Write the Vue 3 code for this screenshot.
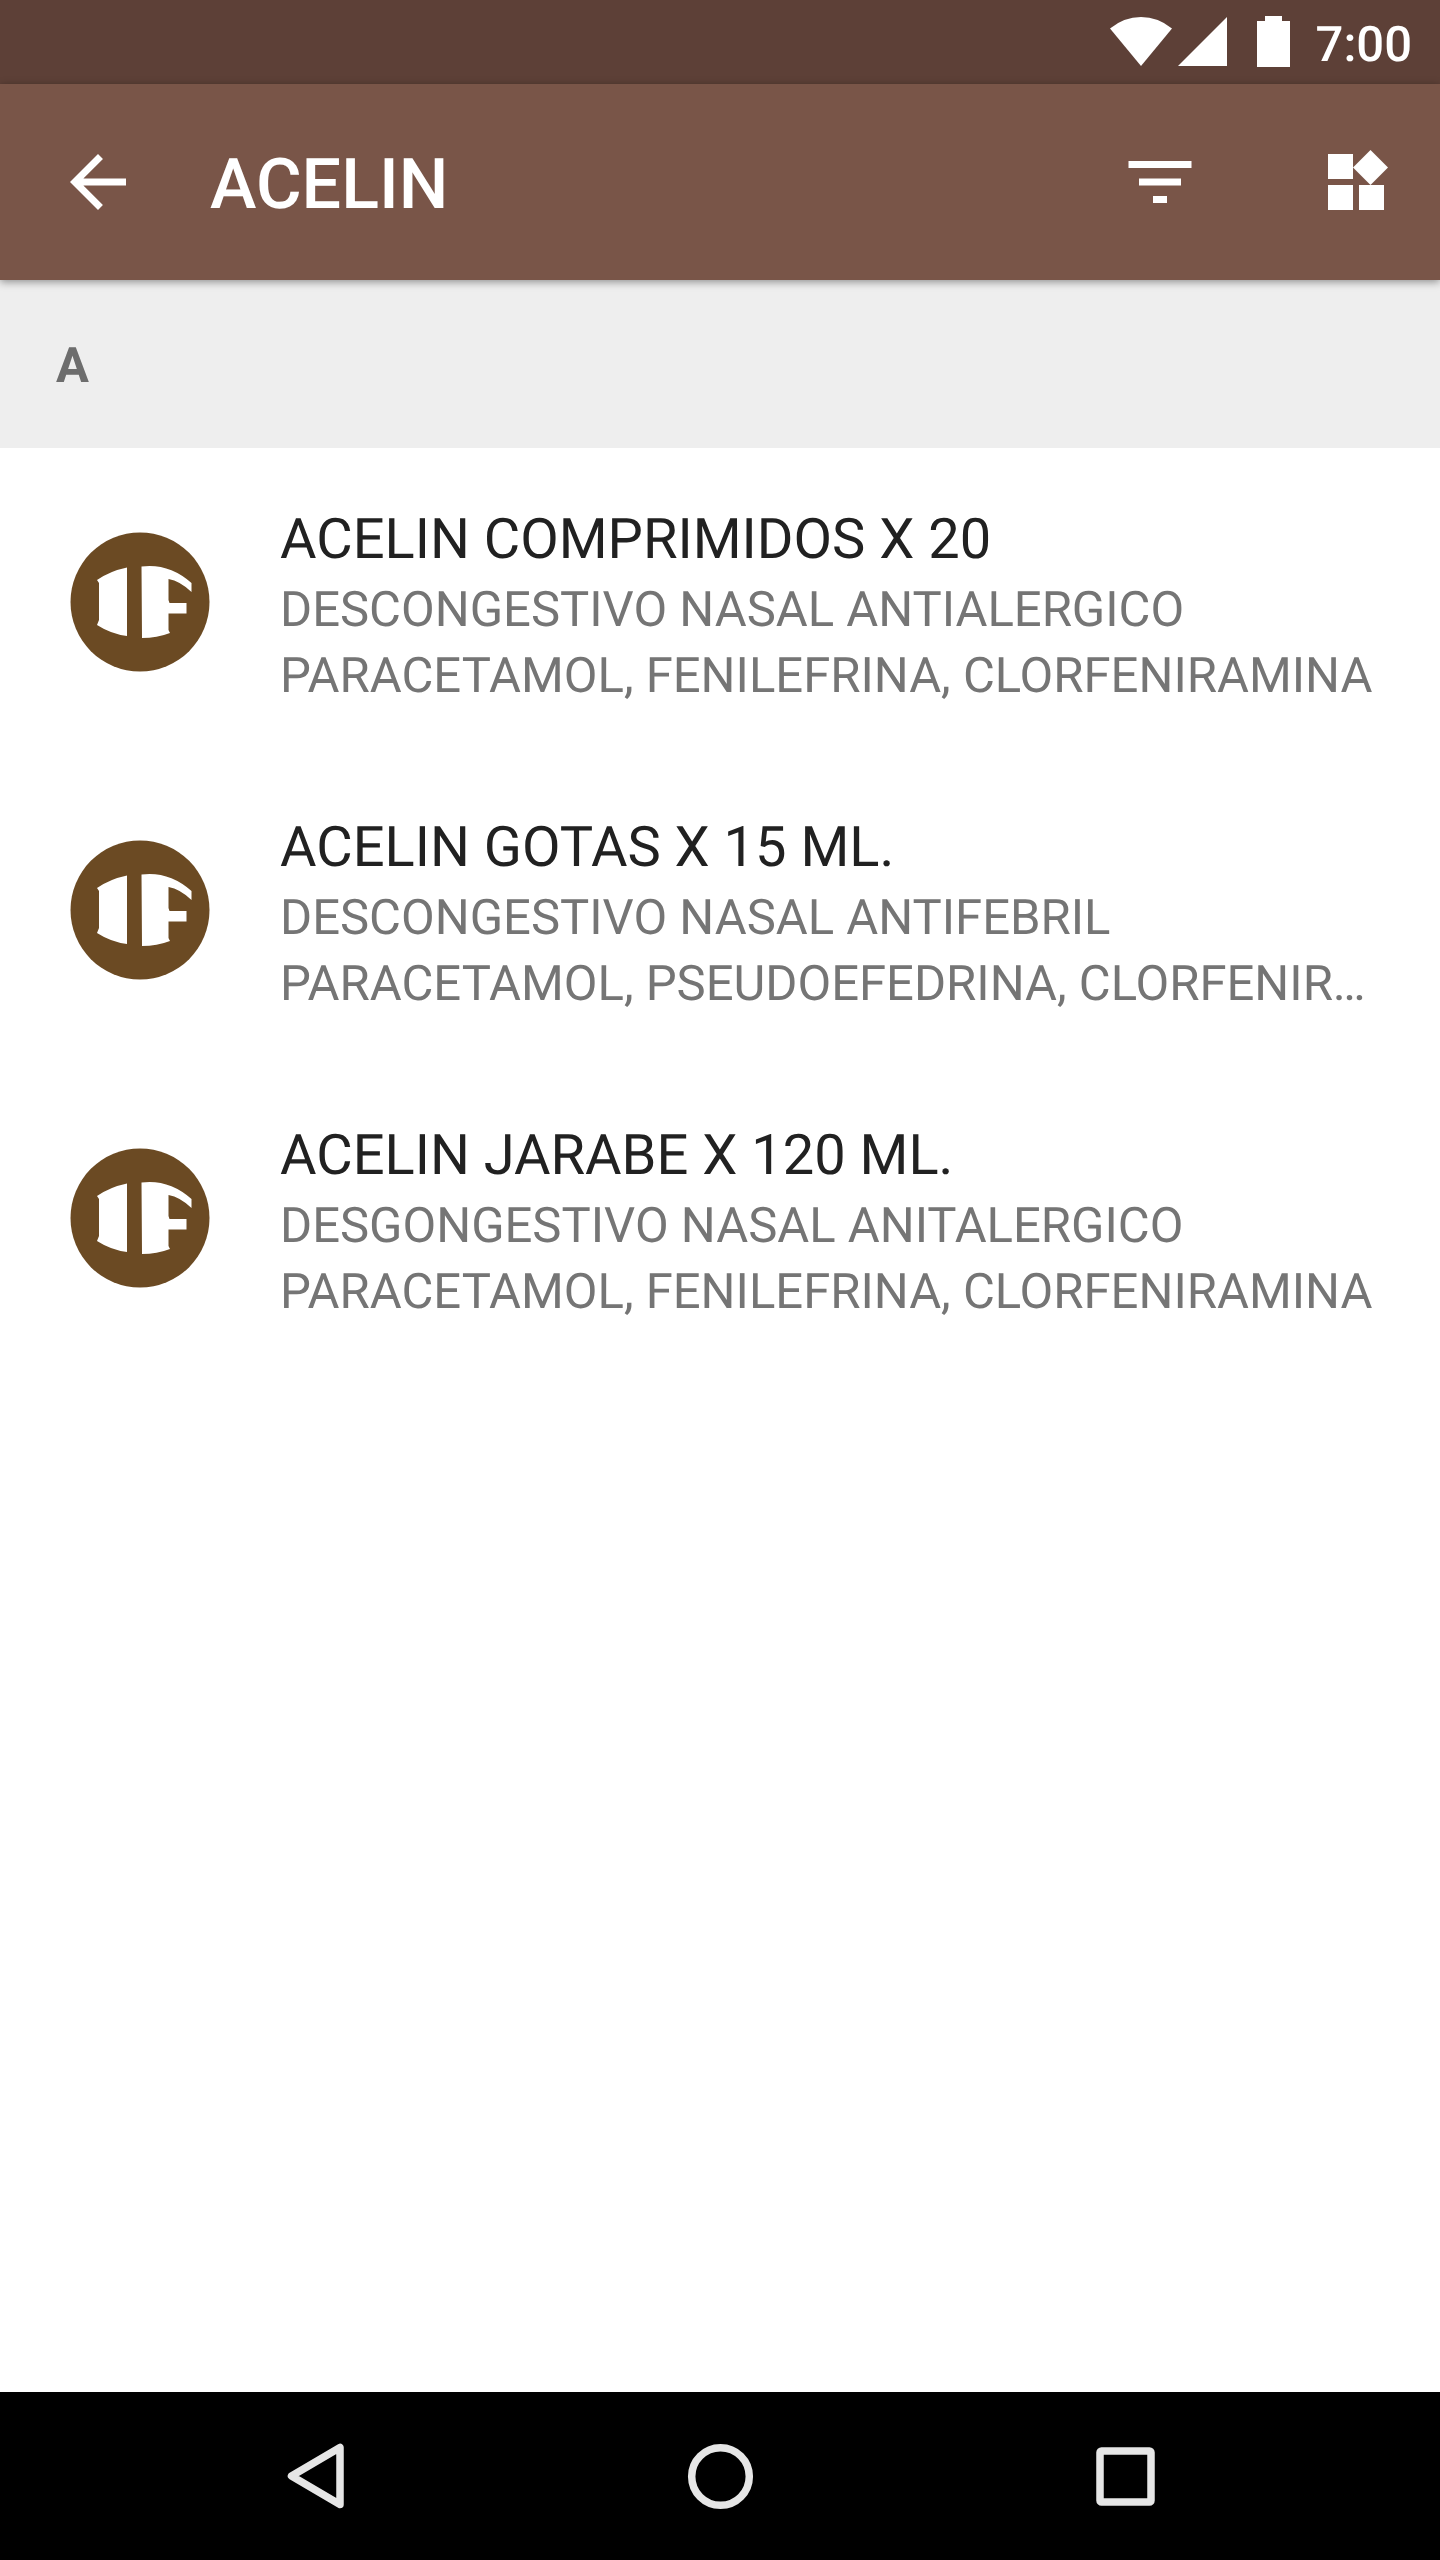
<script setup>
const letter = 'A'
const products = [
  {
    name: 'ACELIN COMPRIMIDOS X 20',
    action: 'DESCONGESTIVO NASAL ANTIALERGICO',
    drugs: 'PARACETAMOL, FENILEFRINA, CLORFENIRAMINA',
  },
  {
    name: 'ACELIN GOTAS X 15 ML.',
    action: 'DESCONGESTIVO NASAL ANTIFEBRIL',
    drugs: 'PARACETAMOL, PSEUDOEFEDRINA, CLORFENIRAMINA',
  },
  {
    name: 'ACELIN JARABE X 120 ML.',
    action: 'DESGONGESTIVO NASAL ANITALERGICO',
    drugs: 'PARACETAMOL, FENILEFRINA, CLORFENIRAMINA',
  },
]
</script>

<template>
  <div class="screen">
    <div class="status">
      <svg class="signals" viewBox="0 0 188 84" aria-hidden="true">
        <path d="M0 28.5Q14 17 31 17T62 28.5L31 66z" />
        <path d="M68 66L117 17V66z" />
        <path d="M147 21h8v-5h17v5h8v46h-33z" />
      </svg>
      <time class="clock">7:00</time>
    </div>

    <header class="toolbar">
      <button class="icon-button" type="button" aria-label="Back">
        <svg viewBox="0 0 24 24"><path d="M20 11H7.83l5.59-5.59L12 4l-8 8 8 8 1.41-1.41L7.83 13H20v-2z" /></svg>
      </button>
      <h1 class="title">ACELIN</h1>
      <div class="actions">
        <button class="icon-button" type="button" aria-label="Filter">
          <svg viewBox="0 0 24 24"><path d="M10 18h4v-2h-4v2zM3 6v2h18V6H3zm3 7h12v-2H6v2z" /></svg>
        </button>
        <button class="icon-button" type="button" aria-label="Categories">
          <svg viewBox="0 0 84 84"><path d="M14 14h25v25H14zM14 45h25v25H14zM45 45h25v25H45zM56.5 10L74 27.5 56.5 45 39 27.5z" /></svg>
        </button>
      </div>
    </header>

    <main class="content">
      <h2 class="section">{{ letter }}</h2>
      <ul class="list">
        <li v-for="product in products" :key="product.name">
          <a class="item" href="#">
            <svg class="logo" viewBox="0 0 140 140" aria-hidden="true">
              <circle cx="70" cy="70" r="69.5" fill="#6b4a23" />
              <path d="M27 48Q40 39 57 35.5V104Q41 102 27 93L29 88V51z" fill="#fff" />
              <path d="M71.5 34.5Q99 31 121.500 51V60Q110 49 98.5 47V68L99.5 71H116.5V81.5H98.5V98L100 101Q87 106 72 106z" fill="#fff" />
            </svg>
            <span class="texts">
              <span class="name">{{ product.name }}</span>
              <span class="detail">{{ product.action }}</span>
              <span class="detail">{{ product.drugs }}</span>
            </span>
          </a>
        </li>
      </ul>
    </main>

    <nav class="navbar">
      <button class="nav-button" type="button" aria-label="Back">
        <svg viewBox="0 0 84 84"><path d="M67 13.5V70.5L18.5 42z" /></svg>
      </button>
      <button class="nav-button" type="button" aria-label="Home">
        <svg viewBox="0 0 84 84"><circle cx="42.5" cy="42.5" r="28.8" /></svg>
      </button>
      <button class="nav-button" type="button" aria-label="Recent apps">
        <svg viewBox="0 0 84 84"><rect x="17" y="17" width="51" height="51" rx="1.5" /></svg>
      </button>
    </nav>
  </div>
</template>

<style>
body {
  margin: 0;
  background: #fff;
}
</style>

<style scoped>
.screen {
  display: flex;
  flex-direction: column;
  min-height: 100vh;
  font-family: Roboto, "Liberation Sans", sans-serif;
  text-rendering: geometricPrecision;
  background: #fff;
}

button {
  display: flex;
  align-items: center;
  justify-content: center;
  padding: 0;
  border: 0;
  background: none;
}

svg {
  display: block;
  flex: none;
}

.status {
  display: flex;
  justify-content: flex-end;
  align-items: center;
  gap: 18px;
  height: 84px;
  padding-right: 28px;
  background: #5d4037;
  color: #fff;
}

.signals {
  width: 188px;
  height: 84px;
  fill: #fff;
}

.clock {
  padding-top: 5px;
  font-size: 49px;
  font-weight: 500;
  line-height: 58px;
}

.toolbar {
  display: flex;
  align-items: center;
  height: 196px;
  padding: 0 42px 0 56px;
  background: #795548;
  color: #fff;
  box-shadow: 0 2px 8px rgba(0, 0, 0, 0.4);
  z-index: 1;
}

.icon-button svg {
  width: 84px;
  height: 84px;
  fill: #fff;
}

.title {
  flex: 1;
  margin: 0;
  padding: 6px 0 0 70px;
  font-size: 70px;
  font-weight: 500;
  line-height: 82px;
}

.actions {
  display: flex;
  gap: 112px;
}

.content {
  flex: 1;
}

.section {
  margin: 0;
  padding: 57px 56px 53px;
  background: #eee;
  color: #6d6d6d;
  font-size: 49px;
  font-weight: 700;
  line-height: 58px;
}

.list {
  margin: 0;
  padding: 0;
  list-style: none;
}

.item {
  display: flex;
  align-items: center;
  gap: 70px;
  height: 308px;
  padding: 0 56px 0 70px;
  color: #212121;
  text-decoration: none;
}

.logo {
  width: 140px;
  height: 140px;
}

.texts {
  display: flex;
  flex: 1;
  flex-direction: column;
  min-width: 0;
  padding-top: 11px;
}

.name,
.detail {
  overflow: hidden;
  line-height: 66px;
  text-overflow: ellipsis;
  white-space: nowrap;
}

.name {
  margin-bottom: 5px;
  font-size: 56px;
}

.detail {
  color: #757575;
  font-size: 49px;
}

.navbar {
  display: flex;
  height: 168px;
  padding: 0 112px;
  background: #000;
}

.nav-button {
  flex: 1;
}

.nav-button svg {
  width: 84px;
  height: 84px;
  fill: none;
  stroke: #e6e6e6;
  stroke-width: 7.5;
  stroke-linejoin: round;
}
</style>
